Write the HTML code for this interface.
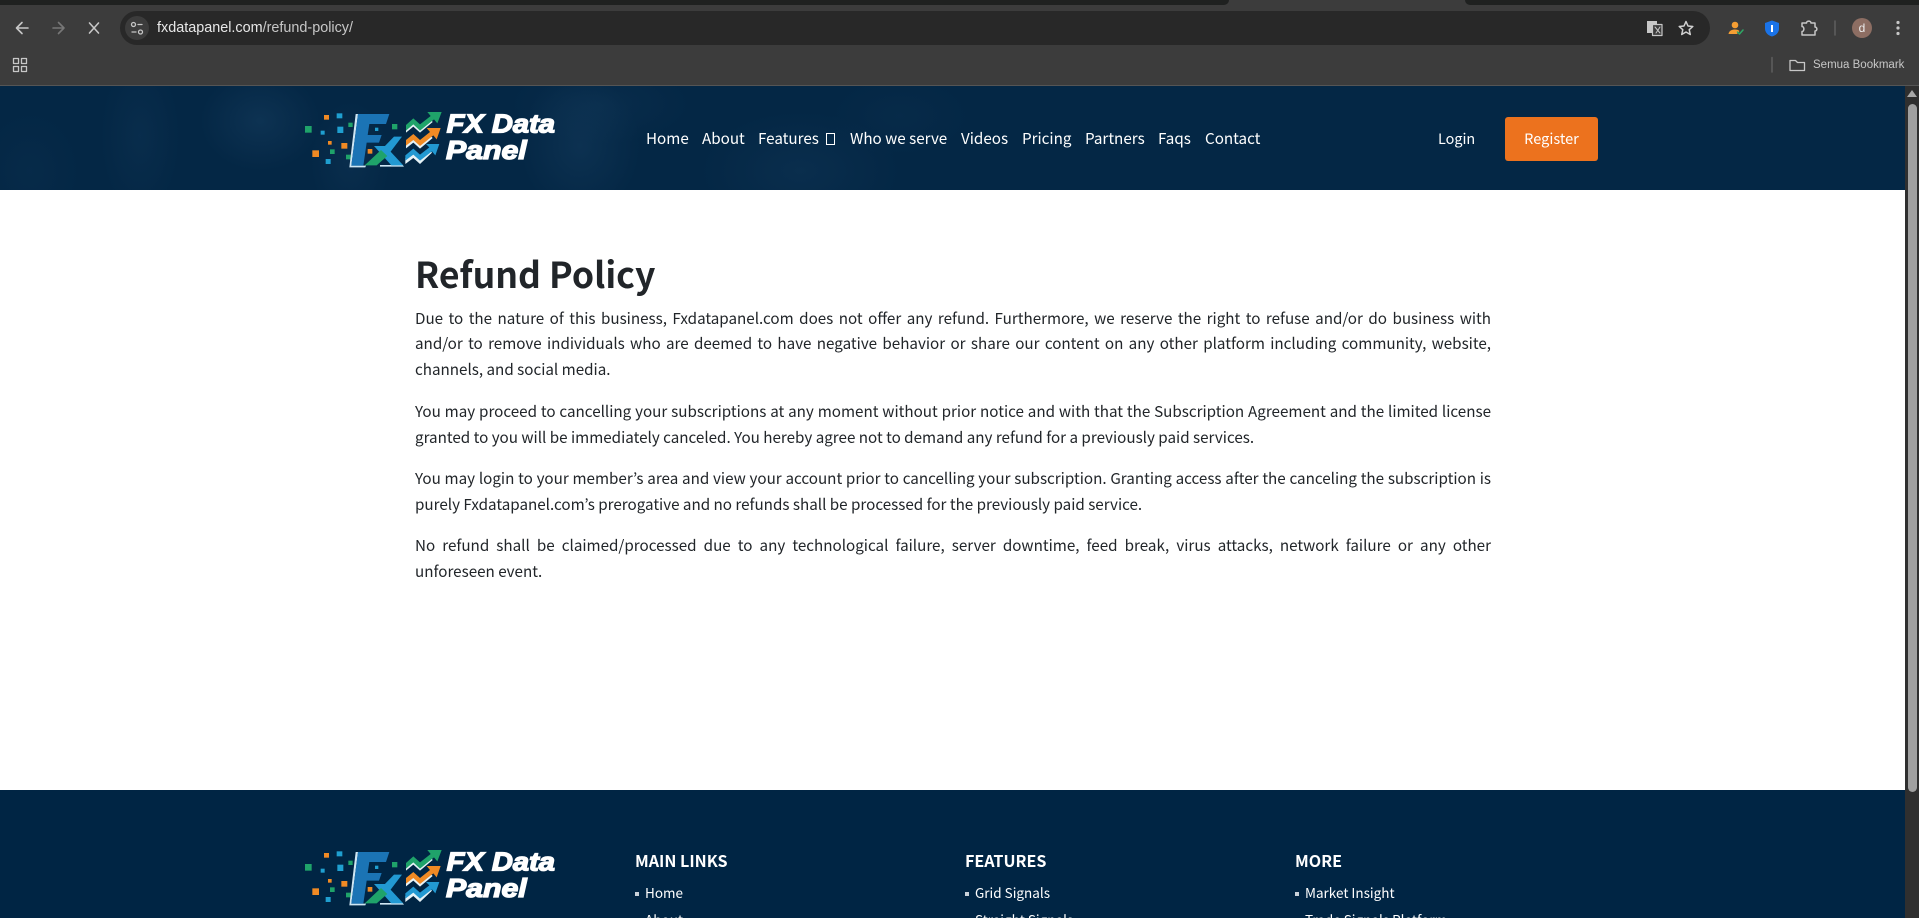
<!DOCTYPE html>
<html><head><meta charset="utf-8"><title>Refund Policy</title>
<style>
*{box-sizing:border-box;margin:0;padding:0}
html,body{width:1919px;height:918px;overflow:hidden;background:#fff}
body{position:relative;font-family:"Noto Sans CJK JP","Liberation Sans",sans-serif;color:#212529}
.a{position:absolute;white-space:nowrap}
.c{font-family:"Liberation Sans",sans-serif}
.nav{position:absolute;top:126px;line-height:24px;font-size:15.2px;color:#fff;white-space:nowrap}
.body{position:absolute;left:415px;width:1076px;font-size:15.2px;line-height:25.6px;text-align:justify;color:#212529}
.ft{position:absolute;font-weight:700;font-size:16.1px;line-height:24px;color:#fff;white-space:nowrap}
.fl{position:absolute;font-size:13.5px;line-height:22px;color:#fff;white-space:nowrap}
.bu{position:absolute;width:4px;height:4px;background:#c9d2da}
</style></head>
<body>
<!-- browser chrome -->
<div class="a" style="left:0;top:0;width:1919px;height:86px;background:#3c3c3c"></div>
<div class="a" style="left:0;top:0;width:1229px;height:5px;background:#1f2120;border-radius:0 0 8px 0"></div>
<div class="a" style="left:1465px;top:0;width:454px;height:5px;background:#1f2120;border-radius:0 0 0 8px"></div>
<div class="a" style="left:0;top:85px;width:1919px;height:1px;background:#555"></div>
<div class="a" style="left:120px;top:11px;width:1590px;height:34px;background:#282828;border-radius:17px"></div>
<div class="a" style="left:125px;top:16px;width:24px;height:24px;background:#3c3c3c;border-radius:50%"></div>
<svg class="a" style="left:0;top:0" width="1919" height="86" viewBox="0 0 1919 86" fill="none" stroke-linecap="round" stroke-linejoin="round">
<path d="M28 28H17M22 22.5L16.500 28L22 33.500" stroke="#c7c7c7" stroke-width="1.600"/>
<path d="M53 28H64M58.500 22.500L64 28L58.500 33.500" stroke="#777" stroke-width="1.600"/>
<path d="M89.500 23L98.500 33M98.500 23L89.500 33" stroke="#c7c7c7" stroke-width="1.600"/>
<circle cx="133.500" cy="24.500" r="2" stroke="#c7c7c7" stroke-width="1.300"/><path d="M138 24.500H142M132 32H136" stroke="#c7c7c7" stroke-width="1.300"/><circle cx="140.500" cy="32" r="2" stroke="#c7c7c7" stroke-width="1.300"/>
<rect x="1647" y="21" width="10" height="12" fill="#c7c7c7"/><rect x="1652.500" y="24.500" width="9.500" height="11" fill="#3c3c3c" stroke="#c7c7c7" stroke-width="1.200"/><path d="M1655 27L1660 33M1660 27L1656 33" stroke="#c7c7c7" stroke-width="1"/>
<path d="M1686 21.500L1688 26L1692.800 26.500L1689.200 29.700L1690.300 34.500L1686 32L1681.700 34.500L1682.800 29.700L1679.200 26.500L1684 26Z" stroke="#d0d0d0" stroke-width="1.500"/>
<circle cx="1735" cy="25" r="3.300" fill="#f59e33" stroke="none"/><path d="M1728.500 34C1729 30.500 1732 29.500 1735 29.500C1737 29.500 1738.500 30 1739.500 31L1737 34Z" fill="#f59e33" stroke="none"/><path d="M1737.500 32L1739.500 34L1743 30" stroke="#2fa866" stroke-width="1.500"/>
<path d="M1772 20.500L1779 23V28.500C1779 32.500 1776 35.500 1772 36.500C1768 35.500 1765 32.500 1765 28.500V23Z" fill="#1a73e8" stroke="none"/><rect x="1771" y="25" width="2" height="7" fill="#fff" stroke="none"/>
<path d="M1802 23H1806.500C1806.500 20.500 1811 20.500 1811 23H1815V27C1817.500 27 1817.500 31 1815 31V35H1802V31.500C1804.500 31.500 1804.500 26.500 1802 26.500Z" stroke="#c7c7c7" stroke-width="1.500"/>
<path d="M1835 21V35" stroke="#5f5f5f" stroke-width="1.500"/>
<circle cx="1898" cy="22.500" r="1.600" fill="#c7c7c7" stroke="none"/><circle cx="1898" cy="28" r="1.600" fill="#c7c7c7" stroke="none"/><circle cx="1898" cy="33.500" r="1.600" fill="#c7c7c7" stroke="none"/>
<g stroke="#c7c7c7" stroke-width="1.300"><rect x="13.500" y="58.500" width="5" height="5"/><rect x="21.500" y="58.500" width="5" height="5"/><rect x="13.500" y="66.500" width="5" height="5"/><rect x="21.500" y="66.500" width="5" height="5"/></g>
<path d="M1772 57.500V72" stroke="#5f5f5f" stroke-width="1.500"/>
<path d="M1790 60.500H1795.500L1797.500 62.500H1804.500V70.500H1790Z" stroke="#c7c7c7" stroke-width="1.300"/>
</svg>
<div class="a c" style="left:1852px;top:18px;width:20px;height:20px;border-radius:50%;background:#8d6e63;color:#eee;font-size:12px;line-height:20px;text-align:center">d</div>
<div class="a c" style="left:157px;top:20px;font-size:14.400px;line-height:17px;color:#c7c7c7"><span style="color:#e8e8e8">fxdatapanel.com</span>/refund-policy/</div>
<div class="a c" style="left:1813px;top:57px;font-size:11.500px;line-height:16px;color:#c7c7c7">Semua Bookmark</div>

<!-- header -->
<div class="a" style="left:0;top:86px;width:1905px;height:104px;background:
radial-gradient(ellipse 60px 50px at 260px 35px,rgba(50,95,135,.2),transparent),
radial-gradient(ellipse 40px 80px at 140px 50px,rgba(50,95,135,.1),transparent),
radial-gradient(ellipse 60px 70px at 580px 60px,rgba(50,95,135,.18),transparent),
radial-gradient(ellipse 90px 40px at 600px 18px,rgba(50,95,135,.1),transparent),
radial-gradient(ellipse 40px 60px at 350px 75px,rgba(50,95,135,.12),transparent),
radial-gradient(ellipse 100px 60px at 800px 85px,rgba(50,95,135,.12),transparent),
radial-gradient(ellipse 70px 40px at 900px 30px,rgba(50,95,135,.06),transparent),
radial-gradient(ellipse 50px 60px at 30px 85px,rgba(50,95,135,.06),transparent),
#042745"></div>

<svg class="a" style="left:280px;top:90px" width="320" height="100" viewBox="0 0 960 300">
<g id="lg">
<g fill="#f08a24"><rect x="132" y="75" width="15" height="14"/><rect x="144" y="153" width="11" height="11"/><rect x="184" y="159" width="18" height="17"/><rect x="97" y="181" width="20" height="20"/></g>
<g fill="#1f9fd0"><rect x="170" y="70" width="17" height="15"/><rect x="122" y="122" width="12" height="12"/><rect x="172" y="110" width="18" height="19"/><rect x="137" y="207" width="15" height="15"/></g>
<g fill="#1fa36a"><rect x="205" y="98" width="13" height="13"/><rect x="75" y="108" width="20" height="20"/><rect x="150" y="178" width="14" height="14"/><rect x="198" y="194" width="14" height="14"/><rect x="336" y="102" width="16" height="16"/></g>
<path d="M227 72H234L214 227H258L256 232H208Z" fill="#cfe6f3"/>
<path d="M234 72H328L318 102H268L263 135H305L297 158H260L250 227H214Z" fill="#1b74b5"/>
<rect x="285" y="113" width="10" height="10" fill="#1f9fd0"/>
<rect x="263" y="177" width="14" height="14" fill="#f08a24"/>
<path d="M300 225L368 225L372 230H300Z" fill="#cfe6f3"/>
<path d="M282 168H316L370 226H334Z" fill="#2299d2"/>
<path d="M254 226L303 180L322 198L290 226Z" fill="#1fa36a"/>
<path d="M305 178L342 140H366L322 198Z" fill="#2299d2"/>
<path d="M378 113L400 95L420 113L452 88L458 96L420 128L400 110L378 128Z" fill="#e6f2f6"/>
<path d="M378 105L400 85L420 103L452 78L442 66H485L472 100L462 88L420 122L400 103L378 122Z" fill="#1fa36a"/>
<path d="M378 160L400 142L420 160L450 136L458 144L420 176L400 158L378 175Z" fill="#e6f2f6"/>
<path d="M378 150L400 132L420 150L450 126L440 114H482L470 148L460 136L420 168L400 150L378 167Z" fill="#f08a24"/>
<path d="M376 204L400 184L420 202L448 180L456 188L420 222L400 204L376 222Z" fill="#e6f2f6"/>
<path d="M376 196L400 176L420 194L448 172L438 162H478L466 196L456 184L420 212L400 194L376 212Z" fill="#2299d2"/>
<text x="500" y="128" font-family="Liberation Sans" font-weight="700" font-style="italic" font-size="78" fill="#fff" stroke="#fff" stroke-width="4" textLength="325" lengthAdjust="spacingAndGlyphs">FX Data</text>
<text x="498" y="207" font-family="Liberation Sans" font-weight="700" font-style="italic" font-size="78" fill="#fff" stroke="#fff" stroke-width="4" textLength="242" lengthAdjust="spacingAndGlyphs">Panel</text>
</g>
</svg>

<div class="nav" style="left:646px">Home</div>
<div class="nav" style="left:702px">About</div>
<div class="nav" style="left:758px">Features</div>
<div class="a" style="left:826px;top:133px;width:9px;height:12px;border:1px solid #fff"></div>
<div class="nav" style="left:850px">Who we serve</div>
<div class="nav" style="left:961px">Videos</div>
<div class="nav" style="left:1022px">Pricing</div>
<div class="nav" style="left:1085px">Partners</div>
<div class="nav" style="left:1158px">Faqs</div>
<div class="nav" style="left:1205px">Contact</div>
<div class="nav" style="left:1438px;top:127px;font-size:14.400px">Login</div>
<div class="a" style="left:1505px;top:117px;width:93px;height:44px;background:#ec721e;border-radius:3px;color:#fff;font-size:14.550px;line-height:44px;text-align:center">Register</div>

<!-- content -->
<h1 class="a" style="left:415px;top:250px;font-size:35.600px;line-height:48px;font-weight:700;color:#212529">Refund Policy</h1>
<p class="body" style="top:305.500px">Due to the nature of this business, Fxdatapanel.com does not offer any refund. Furthermore, we reserve the right to refuse and/or do business with and/or to remove individuals who are deemed to have negative behavior or share our content on any other platform including community, website, channels, and social media.</p>
<p class="body" style="top:399px">You may proceed to cancelling your subscriptions at any moment without prior notice and with that the Subscription Agreement and the limited license granted to you will be immediately canceled. You hereby agree not to demand any refund for a previously paid services.</p>
<p class="body" style="top:466px">You may login to your member’s area and view your account prior to cancelling your subscription. Granting access after the canceling the subscription is purely Fxdatapanel.com’s prerogative and no refunds shall be processed for the previously paid service.</p>
<p class="body" style="top:533px">No refund shall be claimed/processed due to any technological failure, server downtime, feed break, virus attacks, network failure or any other unforeseen event.</p>

<!-- footer -->
<div class="a" style="left:0;top:790px;width:1905px;height:128px;background:#002544"></div>
<svg class="a" style="left:280px;top:828px" width="320" height="100" viewBox="0 0 960 300"><use href="#lg"/></svg>
<div class="ft" style="left:635px;top:848px">MAIN LINKS</div>
<div class="bu" style="left:635px;top:892px"></div><div class="fl" style="left:645px;top:881px">Home</div>
<div class="bu" style="left:635px;top:919px"></div><div class="fl" style="left:645px;top:908px">About</div>
<div class="ft" style="left:965px;top:848px">FEATURES</div>
<div class="bu" style="left:965px;top:892px"></div><div class="fl" style="left:975px;top:881px">Grid Signals</div>
<div class="bu" style="left:965px;top:919px"></div><div class="fl" style="left:975px;top:908px">Straight Signals</div>
<div class="ft" style="left:1295px;top:848px">MORE</div>
<div class="bu" style="left:1295px;top:892px"></div><div class="fl" style="left:1305px;top:881px">Market Insight</div>
<div class="bu" style="left:1295px;top:919px"></div><div class="fl" style="left:1305px;top:908px">Trade Signals Platform</div>

<!-- scrollbar -->
<div class="a" style="left:1905px;top:86px;width:14px;height:832px;background:#2f2f2f"></div>
<svg class="a" style="left:1905px;top:88px" width="14" height="12"><path d="M7 2L12 9H2Z" fill="#a8a8a8"/></svg>
<div class="a" style="left:1908px;top:104px;width:9px;height:688px;background:#a0a0a0;border-radius:5px"></div>
</body></html>
